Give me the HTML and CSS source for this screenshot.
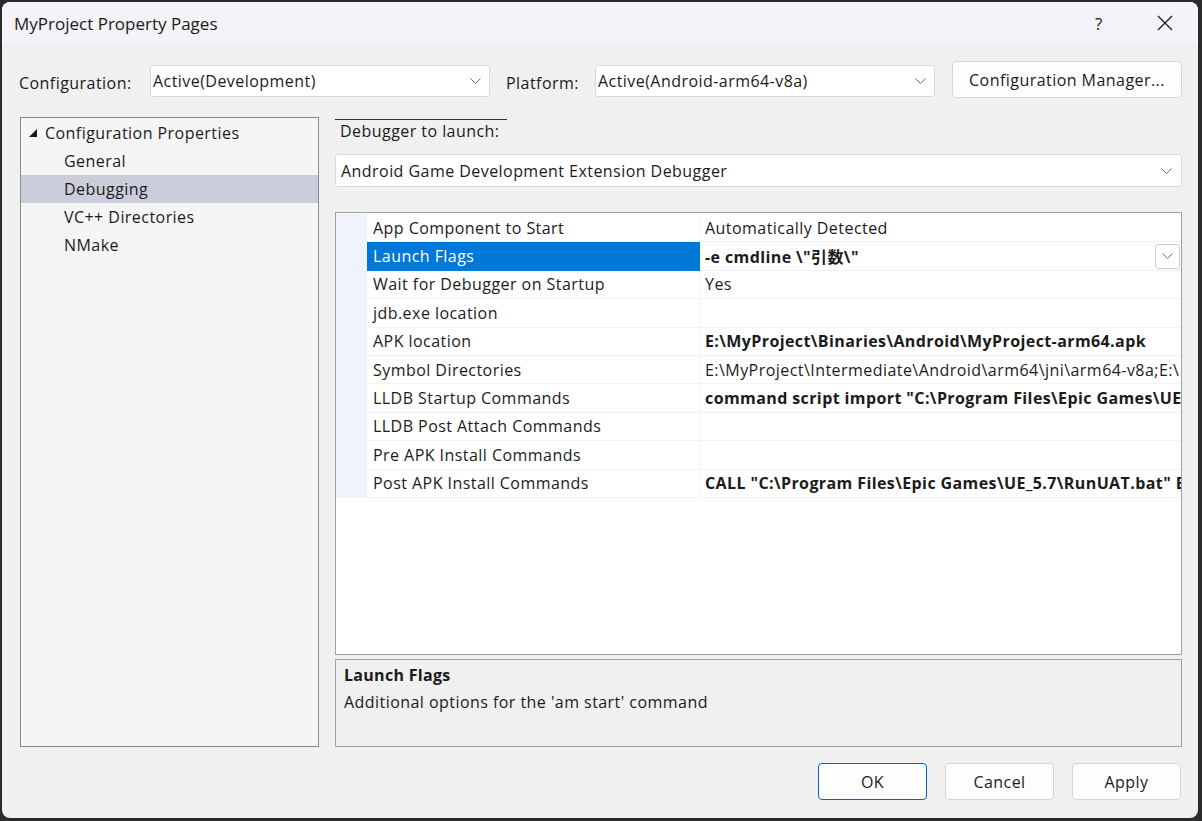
FILE: index.html
```html
<!DOCTYPE html>
<html>
<head>
<meta charset="utf-8">
<link rel="stylesheet" href="styles.css">
</head>
<body>
<div class="window">
  <div class="titlebar">
    <span class="title">MyProject Property Pages</span>
    <div class="tb-buttons">
      <span class="tb-help">?</span>
      <span class="tb-close"><svg width="16" height="16" viewBox="0 0 16 16"><path d="M1 1 L15 15 M15 1 L1 15" stroke="#1a1a1a" stroke-width="1.3" fill="none"/></svg></span>
    </div>
  </div>

  <div class="config-row">
    <span class="lbl lbl-config">Configuration:</span>
    <div class="combo combo-config"><span class="combo-text">Active(Development)</span><svg class="chev" width="11" height="6" viewBox="0 0 11 6"><path d="M0.5 0.5 L5.5 5.5 L10.5 0.5" stroke="#6b6b6b" stroke-width="1" fill="none"/></svg></div>
    <span class="lbl lbl-platform">Platform:</span>
    <div class="combo combo-platform"><span class="combo-text">Active(Android-arm64-v8a)</span><svg class="chev" width="11" height="6" viewBox="0 0 11 6"><path d="M0.5 0.5 L5.5 5.5 L10.5 0.5" stroke="#6b6b6b" stroke-width="1" fill="none"/></svg></div>
    <button class="btn btn-cfgmgr">Configuration Manager...</button>
  </div>

  <div class="main">
    <div class="tree">
      <div class="tree-row root"><svg class="tri" width="8" height="8" viewBox="0 0 8 8"><polygon points="8,0 8,8 0,8" fill="#1a1a1a"/></svg><span>Configuration Properties</span></div>
      <div class="tree-row child">General</div>
      <div class="tree-row child selected">Debugging</div>
      <div class="tree-row child">VC++ Directories</div>
      <div class="tree-row child">NMake</div>
    </div>

    <div class="right">
      <div class="debugger-label">Debugger to launch:</div>
      <div class="combo combo-debugger"><span class="combo-text">Android Game Development Extension Debugger</span><svg class="chev" width="11" height="6" viewBox="0 0 11 6"><path d="M0.5 0.5 L5.5 5.5 L10.5 0.5" stroke="#6b6b6b" stroke-width="1" fill="none"/></svg></div>

      <div class="grid">
        <div class="prow"><div class="gutter"></div><div class="pname">App Component to Start</div><div class="pval">Automatically Detected</div></div>
        <div class="prow"><div class="gutter"></div><div class="pname sel">Launch Flags</div><div class="pval bold"><span class="pval-text">-e cmdline \"引数\"</span><span class="pdrop"><svg width="11" height="6" viewBox="0 0 11 6"><path d="M0.5 0.5 L5.5 5.5 L10.5 0.5" stroke="#6b6b6b" stroke-width="1" fill="none"/></svg></span></div></div>
        <div class="prow"><div class="gutter"></div><div class="pname">Wait for Debugger on Startup</div><div class="pval">Yes</div></div>
        <div class="prow"><div class="gutter"></div><div class="pname">jdb.exe location</div><div class="pval"></div></div>
        <div class="prow"><div class="gutter"></div><div class="pname">APK location</div><div class="pval bold">E:\MyProject\Binaries\Android\MyProject-arm64.apk</div></div>
        <div class="prow"><div class="gutter"></div><div class="pname">Symbol Directories</div><div class="pval">E:\MyProject\Intermediate\Android\arm64\jni\arm64-v8a;E:\</div></div>
        <div class="prow"><div class="gutter"></div><div class="pname">LLDB Startup Commands</div><div class="pval bold">command script import "C:\Program Files\Epic Games\UE_</div></div>
        <div class="prow"><div class="gutter"></div><div class="pname">LLDB Post Attach Commands</div><div class="pval"></div></div>
        <div class="prow"><div class="gutter"></div><div class="pname">Pre APK Install Commands</div><div class="pval"></div></div>
        <div class="prow"><div class="gutter"></div><div class="pname">Post APK Install Commands</div><div class="pval bold">CALL "C:\Program Files\Epic Games\UE_5.7\RunUAT.bat" B</div></div>
      </div>

      <div class="desc">
        <div class="desc-title">Launch Flags</div>
        <div class="desc-text">Additional options for the 'am start' command</div>
      </div>
    </div>
  </div>

  <div class="footer">
    <button class="btn btn-ok">OK</button>
    <button class="btn">Cancel</button>
    <button class="btn">Apply</button>
  </div>
</div>
</body>
</html>
```

FILE: styles.css
```css
html, body {
  margin: 0;
  padding: 0;
}
body {
  background: #2b2b2b;
  width: 1202px;
  height: 821px;
  overflow: hidden;
  font-family: "Open Sans", "Noto Sans", "Noto Sans CJK JP", sans-serif;
  font-size: 16px;
  letter-spacing: 0.45px;
  color: #1b1b1b;
}
.window {
  margin: 2px 0 0 2px;
  width: 1196px;
  height: 816px;
  background: #f0f0f0;
  border-radius: 8px;
  overflow: hidden;
  display: flex;
  flex-direction: column;
}
.titlebar {
  height: 42px;
  flex: none;
  background: #f3f3f8;
  display: flex;
  align-items: center;
  padding-left: 12px;
}
.title {
  font-size: 17px;
  letter-spacing: 0;
  color: #1a1a1a;
}
.tb-buttons {
  margin-left: auto;
  display: flex;
  align-items: center;
  gap: 30px;
  padding-right: 13px;
}
.tb-help, .tb-close {
  width: 40px;
  display: flex;
  justify-content: center;
  align-items: center;
  font-size: 17px;
  color: #1a1a1a;
}
.tb-help { margin-left: 4px; margin-right: -4px; }
.tb-close svg { display: block; }

.config-row {
  display: flex;
  align-items: flex-start;
  margin-top: 17px;
  padding-left: 17px;
  height: 37px;
  flex: none;
}
.lbl {
  line-height: 20px;
  margin-top: 12px;
  white-space: nowrap;
}
.lbl-config { width: 131px; }
.lbl-platform { width: 89px; margin-left: 16px; }
.combo {
  box-sizing: border-box;
  background: #fff;
  border: 1px solid #d9d9d9;
  border-radius: 3px;
  display: flex;
  align-items: center;
  padding-left: 2px;
  padding-right: 8px;
}
.combo-config, .combo-platform {
  width: 340px;
  height: 32px;
  margin-top: 4px;
}
.combo-text {
  flex: 1;
  white-space: nowrap;
  overflow: hidden;
}
.chev { display: block; flex: none; }
.btn {
  box-sizing: border-box;
  width: 109px;
  height: 37px;
  background: #fdfdfd;
  border: 1px solid #d5d5d5;
  border-radius: 4px;
  font-family: inherit;
  font-size: 16px;
  letter-spacing: 0.45px;
  color: #1b1b1b;
  padding: 0;
}
.btn-cfgmgr {
  width: 230px;
  margin-left: 17px;
}
.btn-ok {
  border-color: #0067c0;
}

.main {
  display: flex;
  margin-top: 19px;
  padding-left: 18px;
  gap: 16px;
  height: 630px;
  flex: none;
}
.tree {
  box-sizing: border-box;
  width: 299px;
  height: 630px;
  border: 1px solid #868a91;
  background: #f5f5f5;
  padding-top: 1px;
}
.tree-row {
  height: 28px;
  line-height: 28px;
  white-space: nowrap;
}
.tree-row.root {
  display: flex;
  align-items: center;
  padding-left: 8px;
  gap: 8px;
}
.tri { display: block; }
.tree-row.child { padding-left: 43px; }
.tree-row.selected { background: #cccdda; }

.right {
  width: 847px;
  display: flex;
  flex-direction: column;
}
.debugger-label {
  box-sizing: border-box;
  margin-top: 2px;
  width: 172px;
  border-top: 1px solid #333;
  padding-left: 5px;
  line-height: 22px;
  white-space: nowrap;
}
.combo-debugger {
  margin-top: 12px;
  width: 847px;
  height: 33px;
  padding-left: 5px;
  padding-right: 9px;
}
.grid {
  box-sizing: border-box;
  margin-top: 25px;
  height: 443px;
  border: 1px solid #a0a0a0;
  background: #fff;
  padding-top: 1px;
}
.prow {
  display: flex;
  height: 28.4px;
}
.gutter {
  width: 31px;
  flex: none;
  background: #f0f4fa;
}
.pname {
  box-sizing: border-box;
  width: 333px;
  flex: none;
  border-right: 1px solid #f0f4fa;
  border-bottom: 1px solid #f0f4fa;
  padding-left: 6px;
  display: flex;
  align-items: center;
  white-space: nowrap;
}
.pname.sel {
  background: #0078d7;
  color: #fff;
  border-color: #0078d7;
}
.pval {
  box-sizing: border-box;
  flex: 1;
  min-width: 0;
  border-bottom: 1px solid #f0f4fa;
  padding-left: 5px;
  display: flex;
  align-items: center;
  white-space: nowrap;
  overflow: hidden;
}
.pval.bold { font-weight: 700; letter-spacing: 0.4px; }
.pval-text { flex: 1; }
.pdrop {
  box-sizing: border-box;
  width: 25px;
  height: 25px;
  margin-right: 1px;
  border: 1px solid #cfcfcf;
  border-radius: 3px;
  background: #fff;
  display: flex;
  align-items: center;
  justify-content: center;
  flex: none;
}
.pdrop svg { display: block; }
.desc {
  box-sizing: border-box;
  margin-top: 4px;
  height: 88px;
  border: 1px solid #a0a0a0;
  background: #f0f0f0;
  padding: 4px 8px 0 8px;
}
.desc-title {
  font-weight: 700;
  letter-spacing: 0.3px;
  line-height: 22px;
}
.desc-text {
  margin-top: 5px;
  line-height: 22px;
}
.footer {
  display: flex;
  justify-content: flex-end;
  gap: 18px;
  margin-top: 16px;
  padding-right: 17px;
}
```
